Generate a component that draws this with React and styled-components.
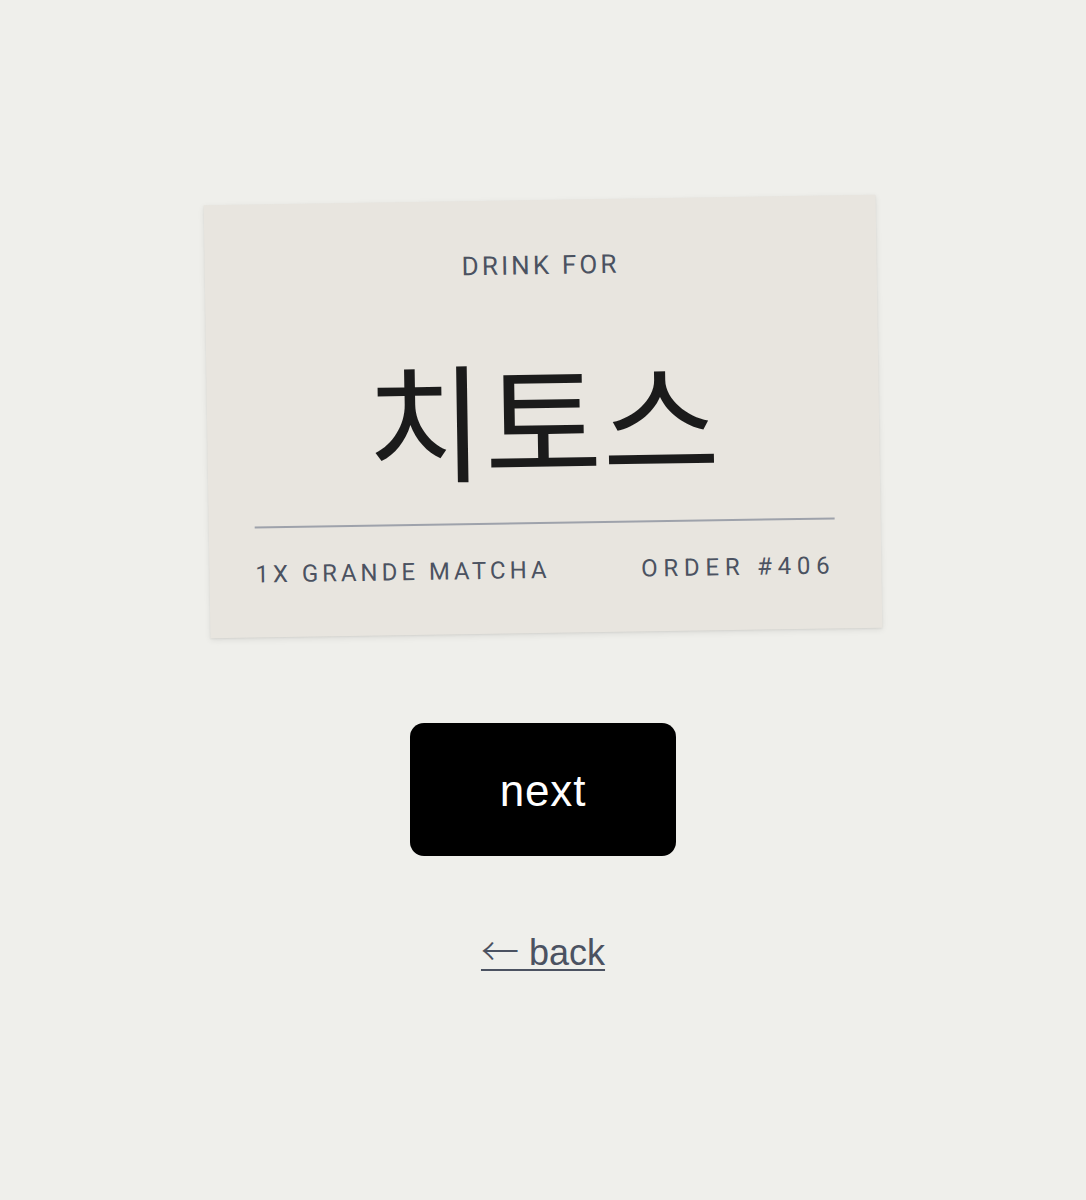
import React from "react";
import styled, { createGlobalStyle } from "styled-components";

const Global = createGlobalStyle`
  html, body { margin: 0; padding: 0; background: #efefeb; }
  body { font-family: Roboto, "Liberation Sans", Arial, sans-serif; }
`;

const Page = styled.main`
  min-height: 1200px;
  display: flex;
  flex-direction: column;
  align-items: center;
  padding-top: 200px;
  box-sizing: border-box;
`;

const Card = styled.section`
  width: 672px;
  height: 433px;
  box-sizing: border-box;
  background: #e8e5df;
  transform: rotate(-0.9deg);
  box-shadow: 0 2px 6px rgba(0, 0, 0, 0.08), 0 1px 2px rgba(0, 0, 0, 0.06);
  padding: 50px 46px 0;
  display: flex;
  flex-direction: column;
  align-items: center;
`;

const Label = styled.div`
  font-size: 26px;
  line-height: 31px;
  letter-spacing: 0.12em;
  color: #4b5261;
  text-transform: uppercase;
`;

const Name = styled.h1`
  margin: 71px 0 0;
  font-family: "Noto Sans CJK KR", "Noto Sans", sans-serif;
  font-weight: 400;
  font-size: 128px;
  line-height: 1;
  color: #1b1b1b;
`;

const Rule = styled.hr`
  align-self: stretch;
  margin: 42px 0 0;
  border: 0;
  height: 2px;
  background: #9ea2ab;
`;

const Meta = styled.div`
  align-self: stretch;
  display: flex;
  justify-content: space-between;
  margin-top: 32px;
`;

const MetaItem = styled.span`
  font-size: 24px;
  line-height: 29px;
  letter-spacing: ${(p) => p.$spacing};
  color: #4b5261;
  text-transform: uppercase;
`;

const NextButton = styled.button`
  margin-top: 90px;
  width: 266px;
  height: 133px;
  border: 0;
  border-radius: 14px;
  background: #000;
  color: #fff;
  font-family: "Liberation Sans", Arial, sans-serif;
  font-size: 44px;
  letter-spacing: 0.02em;
  padding-top: 4px;
  cursor: pointer;
`;

const BackLink = styled.a`
  margin-top: 71px;
  font-family: "Liberation Sans", Arial, sans-serif;
  font-size: 36px;
  line-height: 44px;
  color: #4b5261;
  text-decoration: underline;
  text-decoration-thickness: 2px;
  text-underline-offset: 4px;
  cursor: pointer;
`;

const Arrow = styled.span`
  font-family: "Noto Sans CJK KR", "DejaVu Sans", sans-serif;
  font-weight: 300;
  font-size: 38px;
`;

export default function App() {
  return (
    <>
      <Global />
      <Page>
        <Card>
          <Label>Drink for</Label>
          <Name>치토스</Name>
          <Rule />
          <Meta>
            <MetaItem $spacing="0.165em">1x Grande Matcha</MetaItem>
            <MetaItem $spacing="0.24em">Order #406</MetaItem>
          </Meta>
        </Card>
        <NextButton>next</NextButton>
        <BackLink href="#">
          <Arrow>←</Arrow> back
        </BackLink>
      </Page>
    </>
  );
}
